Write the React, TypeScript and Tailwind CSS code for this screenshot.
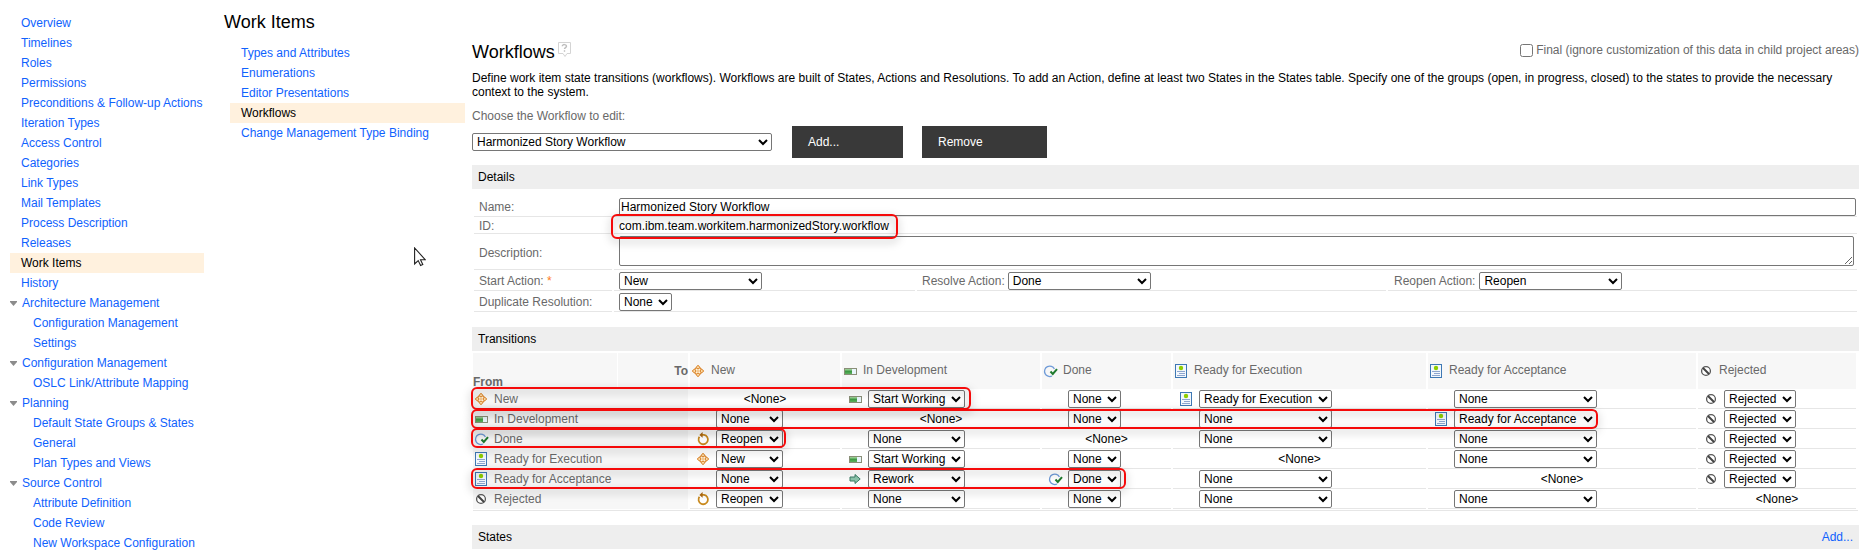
import { useId, type ReactNode } from "react";

type IconName = "new" | "dev" | "done" | "ready" | "rejected" | "reopen" | "rework";

function Icon({ name }: { name: IconName }) {
  const cls = "block size-4 shrink-0";
  switch (name) {
    case "new":
      return (
        <svg className={cls} viewBox="0 0 16 16" aria-hidden="true">
          <path d="M8 3 13 8 8 13 3 8Z" fill="#fff3da" stroke="#dd8a35" strokeWidth="1.2" />
          <path d="M8 5.5v5M5.5 8h5" stroke="#efb878" strokeWidth="1" />
          <path d="M8 2.2 10 4.6 8 5.8 6 4.6ZM8 13.8 10 11.4 8 10.2 6 11.4ZM2.2 8 4.6 6 5.8 8 4.6 10ZM13.8 8 11.4 6 10.2 8 11.4 10Z" fill="#fbd9a4" stroke="#d57a1c" strokeWidth="0.8" />
        </svg>
      );
    case "dev":
      return (
        <svg className={cls} viewBox="0 0 16 16" aria-hidden="true">
          <defs>
            <linearGradient id="devFill" x1="0" y1="0" x2="0" y2="1">
              <stop offset="0" stopColor="#a8d8a0" />
              <stop offset="0.5" stopColor="#3f9a45" />
              <stop offset="1" stopColor="#5fb35f" />
            </linearGradient>
          </defs>
          <rect x="2.5" y="5.5" width="12" height="6" fill="#e9f5fb" stroke="#8a8f78" />
          <rect x="3" y="6" width="7" height="5" fill="url(#devFill)" />
        </svg>
      );
    case "done":
      return (
        <svg className={cls} viewBox="0 0 16 16" aria-hidden="true">
          <path d="M10 13A5.2 5.2 0 1 1 12.4 6" fill="none" stroke="#6f9bd8" strokeWidth="1.3" />
          <path d="M8.5 8.5 10.8 11 15 6.2" fill="none" stroke="#1f7a2e" strokeWidth="2" />
        </svg>
      );
    case "ready":
      return (
        <svg className={cls} viewBox="0 0 16 16" aria-hidden="true">
          <rect x="2.5" y="1.5" width="11" height="13" fill="#f3f8fd" stroke="#3e78b4" />
          <circle cx="8" cy="5" r="2.2" fill="#8fce00" />
          <path d="M4 8.5h8M6 10.5h6M4 12.5h8" stroke="#8ea6cf" />
        </svg>
      );
    case "rejected":
      return (
        <svg className={cls} viewBox="0 0 16 16" aria-hidden="true">
          <circle cx="8" cy="8" r="4.4" fill="#fff" stroke="#555" strokeWidth="1.3" />
          <path d="m5 5 6 6" stroke="#444" strokeWidth="2" />
        </svg>
      );
    case "reopen":
      return (
        <svg className={cls} viewBox="0 0 16 16" aria-hidden="true">
          <path d="M7 3.9H9A4.7 4.7 0 1 1 4.4 5.8" fill="none" stroke="#c98a1e" strokeWidth="1.8" />
          <path d="M7.6 1v5.8L4.4 3.9Z" fill="#b06a10" />
        </svg>
      );
    case "rework":
      return (
        <svg className={cls} viewBox="0 0 16 16" aria-hidden="true">
          <path d="M3 6h5V3.5L13.2 8 8 12.5V10H3Z" fill="#8cc5ac" stroke="#3d7d66" />
        </svg>
      );
  }
}

const mainLinks = [
  "Overview", "Timelines", "Roles", "Permissions", "Preconditions & Follow-up Actions",
  "Iteration Types", "Access Control", "Categories", "Link Types", "Mail Templates",
  "Process Description", "Releases", "Work Items", "History",
];

const groups = [
  { title: "Architecture Management", items: ["Configuration Management", "Settings"] },
  { title: "Configuration Management", items: ["OSLC Link/Attribute Mapping"] },
  { title: "Planning", items: ["Default State Groups & States", "General", "Plan Types and Views"] },
  { title: "Source Control", items: ["Attribute Definition", "Code Review", "New Workspace Configuration"] },
];

const subLinks = [
  "Types and Attributes", "Enumerations", "Editor Presentations", "Workflows", "Change Management Type Binding",
];

function NavLink({ label, active }: { label: string; active?: boolean }) {
  return (
    <a
      href="#"
      aria-current={active ? "page" : undefined}
      className={
        active
          ? "block bg-[#fff1de] pl-[11px] leading-5 whitespace-nowrap text-black"
          : "block pl-[11px] leading-5 whitespace-nowrap text-[#0f62fe]"
      }
    >
      {label}
    </a>
  );
}

function Select({ value, width, label, id }: { value: string; width: string; label?: string; id?: string }) {
  return (
    <select
      id={id}
      aria-label={label}
      defaultValue={value}
      className={`block h-[18px] shrink-0 rounded-xs border border-[#767676] bg-white text-black ${width}`}
    >
      <option>{value}</option>
    </select>
  );
}

function SectionBar({ title, children }: { title: string; children?: ReactNode }) {
  return (
    <div className="flex h-6 items-center justify-between bg-[#eee] px-1.5">
      <h2 className="leading-4">{title}</h2>
      {children}
    </div>
  );
}

function Callout({ place }: { place: string }) {
  return (
    <div
      aria-hidden="true"
      className={`pointer-events-none absolute rounded-md border-2 border-[#f50a0a] drop-shadow-[0_3px_4px_rgba(0,0,0,0.35)] ${place}`}
    />
  );
}

type State = { name: string; icon: IconName; col: string; select: string };

const states: State[] = [
  { name: "New", icon: "new", col: "w-[152px]", select: "w-[67px]" },
  { name: "In Development", icon: "dev", col: "w-[200px]", select: "w-[97px]" },
  { name: "Done", icon: "done", col: "w-[131px]", select: "w-[53px]" },
  { name: "Ready for Execution", icon: "ready", col: "w-[255px]", select: "w-[133px]" },
  { name: "Ready for Acceptance", icon: "ready", col: "w-[270px]", select: "w-[143px]" },
  { name: "Rejected", icon: "rejected", col: "", select: "w-[72px]" },
];

type Cell = [string, IconName?];

const transitions: Cell[][] = [
  [["<None>"], ["Start Working", "dev"], ["None"], ["Ready for Execution", "ready"], ["None"], ["Rejected", "rejected"]],
  [["None"], ["<None>"], ["None"], ["None"], ["Ready for Acceptance", "ready"], ["Rejected", "rejected"]],
  [["Reopen", "reopen"], ["None"], ["<None>"], ["None"], ["None"], ["Rejected", "rejected"]],
  [["New", "new"], ["Start Working", "dev"], ["None"], ["<None>"], ["None"], ["Rejected", "rejected"]],
  [["None"], ["Rework", "rework"], ["Done", "done"], ["None"], ["<None>"], ["Rejected", "rejected"]],
  [["Reopen", "reopen"], ["None"], ["None"], ["None"], ["None"], ["<None>"]],
];

function Details() {
  const id = useId();
  const line = "border-b border-[#e6e6e6]";
  const label = "text-[#696969]";
  return (
    <div className="mt-[7px] grid grid-cols-[138px_1fr] gap-x-0.5 px-0.5">
      <div className={`flex h-[21px] items-center pt-0.5 pl-[5px] ${line}`}>
        <label htmlFor={`${id}n`} className={label}>Name:</label>
      </div>
      <div className={`h-[21px] pt-0.5 pr-px pl-[5px] ${line}`}>
        <input
          id={`${id}n`}
          defaultValue="Harmonized Story Workflow"
          className="block h-[18px] w-full rounded-xs border border-[#767676] px-px text-black"
        />
      </div>

      <div className={`flex h-[17px] items-center pt-0.5 pl-[5px] ${line} ${label}`}>ID:</div>
      <div className={`relative flex h-[17px] items-center pt-0.5 pl-[5px] ${line}`}>
        com.ibm.team.workitem.harmonizedStory.workflow
        <Callout place="-top-[3px] -left-[3px] h-[25px] w-[287px]" />
      </div>

      <div className={`flex h-9 items-center pt-0.5 pl-[5px] ${line}`}>
        <label htmlFor={`${id}d`} className={label}>Description:</label>
      </div>
      <div className={`h-9 pt-0.5 pr-[3px] pl-[5px] ${line}`}>
        <textarea id={`${id}d`} className="block h-[30px] w-full resize rounded-xs border border-[#767676]" />
      </div>

      <div className={`flex h-[21px] items-center pt-0.5 pl-[5px] ${line}`}>
        <label htmlFor={`${id}s`} className={label}>
          Start Action: <span className="text-[#ff7b1c]">*</span>
        </label>
      </div>
      <div className="grid grid-cols-[301px_1fr_1fr] gap-x-0.5">
        <div className={`h-[21px] pt-0.5 pl-[5px] ${line}`}>
          <Select id={`${id}s`} value="New" width="w-[143px]" />
        </div>
        <div className={`flex h-[21px] items-center gap-[3px] pt-0.5 pl-[5px] ${line}`}>
          <label htmlFor={`${id}r`} className={label}>Resolve Action:</label>
          <Select id={`${id}r`} value="Done" width="w-[143px]" />
        </div>
        <div className={`flex h-[21px] items-center gap-1 pt-0.5 pl-1.5 ${line}`}>
          <label htmlFor={`${id}o`} className={label}>Reopen Action:</label>
          <Select id={`${id}o`} value="Reopen" width="w-[143px]" />
        </div>
      </div>

      <div className={`flex h-[21px] items-center pt-0.5 pl-[5px] ${line}`}>
        <label htmlFor={`${id}u`} className={label}>Duplicate Resolution:</label>
      </div>
      <div className={`h-[21px] pt-0.5 pl-[5px] ${line}`}>
        <Select id={`${id}u`} value="None" width="w-[53px]" />
      </div>
    </div>
  );
}

function Transitions() {
  const head = "border-r-2 border-white bg-[#f7f7f7] p-0 font-normal";
  return (
    <div className="relative mt-0.5 pr-px pl-px">
      <table className="w-full table-fixed border-separate border-spacing-0 text-left">
        <colgroup>
          <col className="w-[145px]" />
          <col className="w-[72px]" />
          {states.map((s) => (
            <col key={s.name} className={s.col} />
          ))}
        </colgroup>
        <thead>
          <tr className="h-9 text-[#696969]">
            <th className="border-r border-white bg-[#f7f7f7] p-0 align-bottom font-bold">From</th>
            <th className="border-r-2 border-white bg-[#f7f7f7] p-0 text-right font-bold">To</th>
            {states.map((s) => (
              <th key={s.name} scope="col" className={head}>
                <span className="flex items-center gap-[5px]">
                  <Icon name={s.icon} />
                  <span className="pb-0.5">{s.name}</span>
                </span>
              </th>
            ))}
          </tr>
        </thead>
        <tbody>
          {states.map((row, r) => (
            <tr key={row.name} className="h-5">
              <th scope="row" colSpan={2} className={head}>
                <span className="flex items-center gap-[5px] text-[#696969]">
                  <Icon name={row.icon} />
                  {row.name}
                </span>
              </th>
              {transitions[r].map(([value, icon], c) => (
                <td key={c} className="h-5 border-r-2 border-white p-0">
                  {value === "<None>" ? (
                    <div className="flex h-5 items-center justify-center border-b border-[#e6e6e6]">&lt;None&gt;</div>
                  ) : (
                    <div className="flex h-5 items-center border-b border-[#e6e6e6] pt-px">
                      <span className="w-[26px] shrink-0 pl-[5px]">{icon && <Icon name={icon} />}</span>
                      <Select value={value} width={states[c].select} label={`${row.name} to ${states[c].name}`} />
                    </div>
                  )}
                </td>
              ))}
            </tr>
          ))}
        </tbody>
      </table>
      <div className="mt-px border-b border-[#e6e6e6]" />
      <Callout place="top-[34px] -left-px h-[23px] w-[500px]" />
      <Callout place="top-14 -left-px h-5 w-[1127px]" />
      <Callout place="top-[75px] -left-px h-5 w-[315px]" />
      <Callout place="top-[115px] -left-px h-[21px] w-[655px]" />
    </div>
  );
}

export default function App() {
  const id = useId();
  return (
    <div className="relative flex h-screen overflow-hidden bg-white pt-2.5 pr-[11px] pl-2.5 font-['Liberation_Sans',Arial,sans-serif] text-xs leading-[14px] text-black">
      <nav aria-label="Project area" className="mt-[3px] w-[194px] shrink-0">
        {mainLinks.map((l) => (
          <NavLink key={l} label={l} active={l === "Work Items"} />
        ))}
        {groups.map((g) => (
          <div key={g.title}>
            <div className="flex items-center gap-[5px] leading-5">
              <svg className="h-[5px] w-[7px]" viewBox="0 0 7 5" aria-hidden="true">
                <path d="M0 0h7v1L3.5 5 0 1Z" fill="#8c8c8c" />
              </svg>
              <a href="#" className="whitespace-nowrap text-[#0f62fe]">{g.title}</a>
            </div>
            {g.items.map((i) => (
              <div key={i} className="pl-3">
                <NavLink label={i} />
              </div>
            ))}
          </div>
        ))}
      </nav>

      <div className="ml-5 w-[241px] shrink-0">
        <h1 className="text-lg leading-6">Work Items</h1>
        <nav aria-label="Work Items" className="mt-[9px] ml-1.5">
          {subLinks.map((l) => (
            <NavLink key={l} label={l} active={l === "Workflows"} />
          ))}
        </nav>
      </div>

      <main className="ml-[7px] min-w-0 flex-1 pt-[30px]">
        <header className="flex items-center justify-between">
          <h1 className="flex items-start text-lg leading-6">
            Workflows
            <svg className="mt-0.5 ml-0.5 size-[15px]" viewBox="0 0 15 15" aria-hidden="true">
              <path d="M1.5.5h12v11H10l-2 3-2-3H1.5Z" fill="#fff" stroke="#d4d4d4" />
              <path d="M5.3 4.3c0-2.4 4.2-2.2 4.2 0 0 1.3-2 1.4-2 2.7M7.5 8.2v1.5" fill="none" stroke="#bdbdbd" strokeWidth="1.4" />
            </svg>
          </h1>
          <span className="flex items-center gap-[3px] pb-1">
            <input id={`${id}f`} type="checkbox" className="size-[13px]" />
            <label htmlFor={`${id}f`} className="text-[#696969]">
              Final (ignore customization of this data in child project areas)
            </label>
          </span>
        </header>
        <p className="mt-[7px]">
          Define work item state transitions (workflows). Workflows are built of States, Actions and Resolutions. To add
          an Action, define at least two States in the States table. Specify one of the groups (open, in progress,
          closed) to the states to provide the necessary context to the system.
        </p>
        <label htmlFor={`${id}w`} className="mt-2.5 block text-[#696969]">Choose the Workflow to edit:</label>
        <div className="mt-[3px] flex items-center">
          <Select id={`${id}w`} value="Harmonized Story Workflow" width="w-[300px]" />
          <button type="button" className="ml-5 h-8 w-[111px] bg-[#393939] pl-4 text-left text-white">Add...</button>
          <button type="button" className="ml-[19px] h-8 w-[125px] bg-[#393939] pl-4 text-left text-white">Remove</button>
        </div>

        <section className="mt-[7px]">
          <SectionBar title="Details" />
          <Details />
        </section>
        <section className="mt-[15px]">
          <SectionBar title="Transitions" />
          <Transitions />
        </section>
        <section className="mt-3.5">
          <SectionBar title="States">
            <a href="#" className="text-[#0f62fe]">Add...</a>
          </SectionBar>
        </section>
      </main>

      <svg className="absolute top-[247px] left-[414px] h-5 w-3" viewBox="0 0 12 20" aria-hidden="true">
        <path d="M.6 1v16l3.6-3.4 2.4 5 2.2-1-2.3-4.8h4.9Z" fill="#fff" stroke="#222" strokeWidth="1.1" />
      </svg>
    </div>
  );
}
